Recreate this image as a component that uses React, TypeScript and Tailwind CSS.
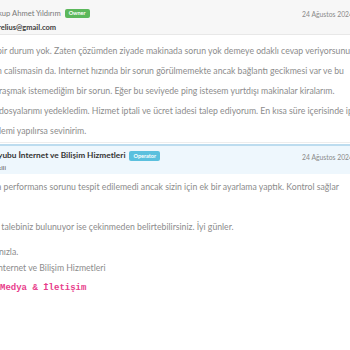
export default function App() {
  const body = "text-[#8c8c8c] text-[8.7px] leading-[20px] whitespace-nowrap";
  return (
    <div className="w-[350px] h-[350px] overflow-hidden bg-white font-['Lato',sans-serif]">
      {/* customer message */}
      <div className="bg-[#f7f7f7] border-b border-[#e8e8e8] h-[35px] flex justify-between">
        <div className="pt-[7px] -ml-[2px]">
          <div className="flex items-center gap-[4px] h-[13px]">
            <span className="text-[#7a7a7a] text-[7.6px] whitespace-nowrap">kup Ahmet Yıldırım</span>
            <span className="bg-[#5cb85c] text-white text-[5.5px] font-bold px-[4px] h-[9px] leading-[9px] rounded-[2px]">Owner</span>
          </div>
          <div className="text-[#3d3d3d] text-[7.5px] font-bold mt-[2px] whitespace-nowrap">relius@gmail.com</div>
        </div>
        <div className="pt-[9px] text-[#8a8a8a] text-[6.8px] whitespace-nowrap -mr-[3px]">24 Ağustos 2024</div>
      </div>
      <div className="pt-[6px] pb-[1px] border-b border-[#ededed]">
        <div className={body + " -ml-[3px]"}>bir durum yok. Zaten çözümden ziyade makinada sorun yok demeye odaklı cevap veriyorsunuz</div>
        <div className={body + " -ml-[3px]"}>n calismasin da. Internet hızında bir sorun görülmemekte ancak bağlantı gecikmesi var ve bu</div>
        <div className={body + " -ml-[1px]"}>raşmak istemediğim bir sorun. Eğer bu seviyede ping istesem yurtdışı makinalar kiralarım.</div>
        <div className={body + " -ml-[1px]"}>dosyalarımı yedekledim. Hizmet iptali ve ücret iadesi talep ediyorum. En kısa süre içerisinde ip</div>
        <div className={body + " -ml-[1px]"}>lemi yapılırsa sevinirim.</div>
      </div>

      {/* operator reply */}
      <div className="mt-[1px] bg-[#eef7fd] border-t-2 border-[#bcdcef] h-[30px] flex justify-between">
        <div className="pt-[3px] -ml-[2px]">
          <div className="flex items-center gap-[4px] h-[13px]">
            <span className="text-[#333] text-[8.3px] font-bold whitespace-nowrap">yubu İnternet ve Bilişim Hizmetleri</span>
            <span className="bg-[#5bc0de] text-white text-[5.5px] font-bold px-[4px] h-[10px] leading-[10px] rounded-[2px]">Operator</span>
          </div>
          <div className="text-[#555] text-[6.5px] mt-[1px] whitespace-nowrap">kili</div>
        </div>
        <div className="pt-[6px] text-[#8a8a8a] text-[6.8px] whitespace-nowrap -mr-[3px]">24 Ağustos 2024</div>
      </div>
      <div className="pt-[3px]">
        <div className={body + " -ml-[3px]"}>a performans sorunu tespit edilemedi ancak sizin için ek bir ayarlama yaptık. Kontrol sağlar</div>
        <div className={body}>&nbsp;</div>
        <div className={body + " -ml-[3px]"}>i talebiniz bulunuyor ise çekinmeden belirtebilirsiniz. İyi günler.</div>
        <div className="text-[#8c8c8c] text-[8.7px] leading-[16px] whitespace-nowrap -ml-[1px] mt-[7px]">nızla.</div>
        <div className="text-[#8c8c8c] text-[8.7px] leading-[16px] whitespace-nowrap -ml-[2px]">nternet ve Bilişim Hizmetleri</div>
        <div className="text-[#e83e8c] text-[9px] font-bold leading-[24px] whitespace-nowrap font-['Liberation_Mono',monospace]">Medya &amp; İletişim</div>
      </div>
    </div>
  );
}
